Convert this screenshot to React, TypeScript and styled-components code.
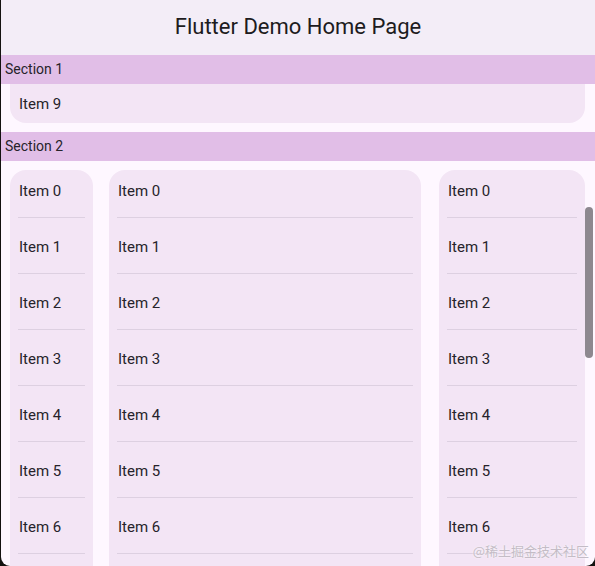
import React from 'react';
import styled, { createGlobalStyle } from 'styled-components';

const GlobalStyle = createGlobalStyle`
  html, body {
    margin: 0;
    padding: 0;
    background: #141210;
  }
  body {
    font-family: Roboto, 'Noto Sans', sans-serif;
    color: #26232a;
  }
`;

const Screen = styled.div`
  position: relative;
  height: 566px;
  margin-left: 1px;
  background: #fef7ff;
  border-radius: 0 0 9px 9px;
  overflow: hidden;
  display: flex;
  flex-direction: column;
`;

const AppBar = styled.header`
  height: 55px;
  flex: none;
  background: #f3edf7;
  display: flex;
  align-items: center;
  justify-content: center;
  font-size: 22px;
  font-weight: 400;
  color: #1d1b20;
  padding-bottom: 3px;
  box-sizing: border-box;
`;

const SectionHeader = styled.div`
  height: 29px;
  flex: none;
  background: #e1bee7;
  display: flex;
  align-items: center;
  padding: 0 0 1px 5px;
  box-sizing: border-box;
  font-size: 14px;
  margin-left: -1px;
`;

const SingleCard = styled.div`
  height: 39px;
  flex: none;
  margin: 0 10px 9px 9px;
  background: #f3e5f5;
  border-radius: 0 0 16px 16px;
  display: flex;
  align-items: center;
  padding: 1px 0 0 9px;
  box-sizing: border-box;
  font-size: 15px;
`;

const Columns = styled.div`
  flex: 1;
  min-height: 0;
  display: grid;
  grid-template-columns: 83px 312px 148px;
  column-gap: 16px;
  padding: 9px 0 0 9px;
  & > :nth-child(3) {
    margin-left: 2px;
  }
`;

const Column = styled.div`
  background: #f3e5f5;
  border-radius: 16px 16px 0 0;
  overflow: hidden;
`;

const List = styled.div`
  margin-top: -8px;
`;

const Row = styled.div`
  height: 56px;
  display: flex;
  flex-direction: column;
`;

const RowLabel = styled.div`
  flex: 1;
  display: flex;
  align-items: center;
  padding: 2px 0 0 9px;
  font-size: 15px;
`;

const Divider = styled.div`
  height: 1px;
  margin: 0 8px;
  background: #ddd0e1;
`;

const Scrollbar = styled.div`
  position: absolute;
  right: 2px;
  top: 207px;
  width: 8px;
  height: 151px;
  border-radius: 4px;
  background: #8d888f;
`;

const Watermark = styled.div`
  position: absolute;
  right: 6px;
  bottom: 6px;
  font-size: 13px;
  color: #c4bcc6;
  font-family: 'Noto Sans CJK SC', sans-serif;
  text-shadow: 0 0 2px #fff;
`;

const items = Array.from({ length: 7 }, (_, i) => `Item ${i}`);

const ItemColumn: React.FC = () => (
  <Column>
    <List>
      {items.map((label) => (
        <Row key={label}>
          <RowLabel>{label}</RowLabel>
          <Divider />
        </Row>
      ))}
    </List>
  </Column>
);

export default function App() {
  return (
    <>
      <GlobalStyle />
      <Screen>
        <AppBar>Flutter Demo Home Page</AppBar>
        <SectionHeader>Section 1</SectionHeader>
        <SingleCard>Item 9</SingleCard>
        <SectionHeader>Section 2</SectionHeader>
        <Columns>
          <ItemColumn />
          <ItemColumn />
          <ItemColumn />
        </Columns>
        <Scrollbar />
        <Watermark>@稀土掘金技术社区</Watermark>
      </Screen>
    </>
  );
}
